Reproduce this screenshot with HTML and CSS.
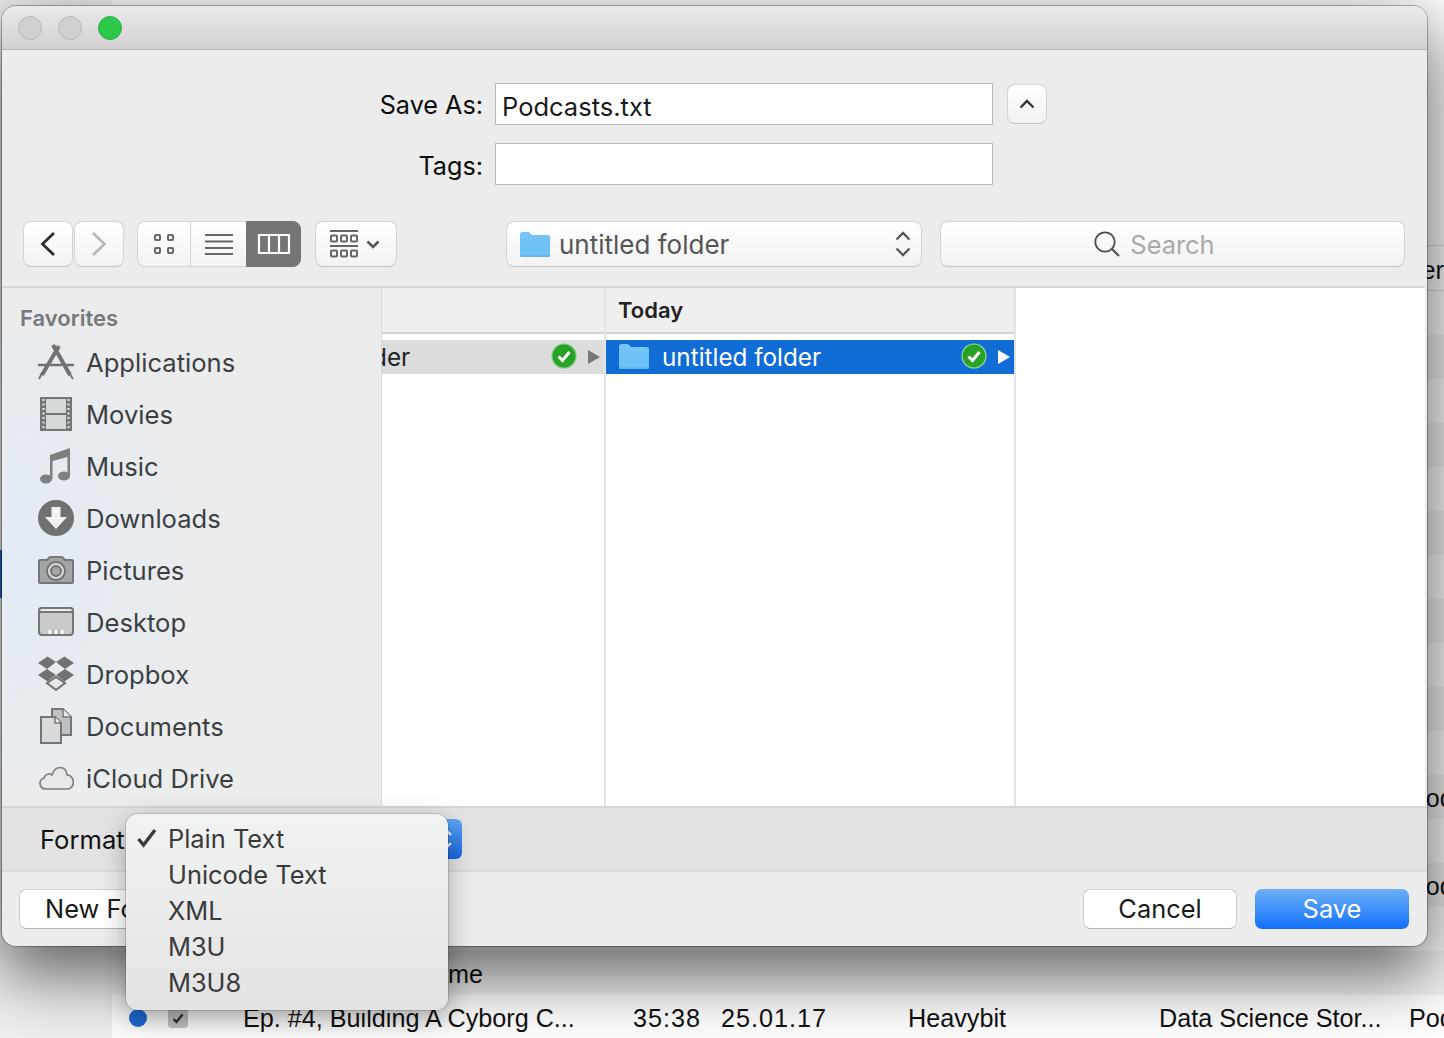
FILE: index.html
```html
<!DOCTYPE html>
<html lang="en">
<head>
<meta charset="utf-8">
<title>Save dialog</title>
<link rel="stylesheet" href="styles.css">
</head>
<body>
<div class="desktop">
  <div class="side-mark"></div>
  <div class="app">
    <div class="app-top"></div>
    <div class="app-row head"><span class="c-last-end">Provider</span></div>
    <div class="app-row"></div><div class="app-row"></div><div class="app-row"></div><div class="app-row"></div>
    <div class="app-row"></div><div class="app-row"></div><div class="app-row"></div><div class="app-row"></div>
    <div class="app-row"></div><div class="app-row"></div><div class="app-row"></div>
    <div class="app-row"><span class="c-last">Podcast</span></div>
    <div class="app-row"></div>
    <div class="app-row"><span class="c-last">Podcast</span></div>
    <div class="app-row"></div>
    <div class="app-row"><span class="c-title-end">Ep. #5, A Good Name</span></div>
    <div class="app-row">
      <span class="dot"></span>
      <span class="tick"><svg width="12" height="11" viewBox="0 0 12 11"><path d="M1.5 6 L4.5 9 L10.5 1.5" fill="none" stroke="#333" stroke-width="2.4"/></svg></span>
      <span class="c-title">Ep. #4, Building A Cyborg C...</span>
      <span class="c-time">35:38</span>
      <span class="c-date">25.01.17</span>
      <span class="c-author">Heavybit</span>
      <span class="c-show">Data Science Stor...</span>
      <span class="c-last">Podcast</span>
    </div>
  </div>

  <div class="dialog">
    <div class="titlebar">
      <span class="light"></span><span class="light"></span><span class="light on"></span>
    </div>

    <div class="form">
      <label class="form-label">Save As:</label>
      <div class="field name">Podcasts.txt</div>
      <button class="tool collapse"><svg width="16" height="10" viewBox="0 0 16 10"><path d="M1.5 8.5 L8 2 L14.5 8.5" fill="none" stroke="#333" stroke-width="2.4"/></svg></button>
      <label class="form-label tags-label">Tags:</label>
      <div class="field tags-field"></div>
    </div>

    <div class="toolbar">
      <div class="nav-pair">
        <button class="tool nav"><svg width="16" height="26" viewBox="0 0 16 26"><path d="M14 2 L2.5 13 L14 24" fill="none" stroke="#2e2e2e" stroke-width="2.8"/></svg></button>
        <button class="tool nav"><svg width="16" height="26" viewBox="0 0 16 26"><path d="M2 2 L13.5 13 L2 24" fill="none" stroke="#b9b9b9" stroke-width="2.8"/></svg></button>
      </div>
      <div class="segments">
        <button class="seg seg-icon"><svg width="22" height="22" viewBox="0 0 22 22"><g fill="none" stroke="#666" stroke-width="2"><rect x="2" y="2" width="5" height="5" rx="1"/><rect x="15" y="2" width="5" height="5" rx="1"/><rect x="2" y="15" width="5" height="5" rx="1"/><rect x="15" y="15" width="5" height="5" rx="1"/></g></svg></button>
        <button class="seg seg-list"><svg width="28" height="22" viewBox="0 0 28 22"><path d="M0 2H28M0 8.5H28M0 15H28M0 21H28" stroke="#666" stroke-width="2"/></svg></button>
        <button class="seg seg-col"><svg width="34" height="22" viewBox="0 0 34 22"><path d="M2 2H32V20H2ZM12 2V20M22 2V20" fill="none" stroke="#fff" stroke-width="2.2"/></svg></button>
      </div>
      <button class="tool arrange">
        <svg width="30" height="28" viewBox="0 0 30 28"><path d="M1 1H29M1 16H29" stroke="#666" stroke-width="2"/><g fill="none" stroke="#666" stroke-width="2"><rect x="2" y="5.5" width="6" height="6" rx="1"/><rect x="12" y="5.5" width="6" height="6" rx="1"/><rect x="22" y="5.5" width="6" height="6" rx="1"/><rect x="2" y="20.5" width="6" height="6" rx="1"/><rect x="12" y="20.5" width="6" height="6" rx="1"/><rect x="22" y="20.5" width="6" height="6" rx="1"/></g></svg>
        <svg width="14" height="9" viewBox="0 0 14 9"><path d="M1.5 1.5 L7 7 L12.5 1.5" fill="none" stroke="#555" stroke-width="2.6"/></svg>
      </button>
      <button class="tool path">
        <svg class="folder" width="30" height="25" viewBox="0 0 30 25"><path d="M0 2.5 Q0 0 2.5 0 H9 L12 3 H28 Q30 3 30 5 V23 Q30 25 28 25 H2 Q0 25 0 23Z" fill="#75c6f7"/><path d="M0 6H30V23Q30 25 28 25H2Q0 25 0 23Z" fill="#6fc3f8"/><path d="M0 24H30" stroke="#58a8dc" stroke-width="1"/></svg>
        <span class="path-text">untitled folder</span>
        <svg class="updown" width="16" height="26" viewBox="0 0 16 26"><path d="M1.5 8.5 L8 2 L14.5 8.5M1.5 17.5 L8 24 L14.5 17.5" fill="none" stroke="#555" stroke-width="2.3"/></svg>
      </button>
      <div class="search">
        <svg width="26" height="26" viewBox="0 0 26 26"><circle cx="11" cy="11" r="9.7" fill="none" stroke="#4d4d4d" stroke-width="1.8"/><path d="M18 18 L25 25" stroke="#4d4d4d" stroke-width="2.2"/></svg>
        <span class="search-text">Search</span>
      </div>
    </div>

    <div class="browser">
      <aside class="sidebar">
        <h2 class="side-title">Favorites</h2>
        <ul class="side-list">
          <li class="side-item">
            <svg width="36" height="36" viewBox="0 0 36 36"><g stroke="#6f7173" fill="none"><path d="M21 2 L4 31" stroke-width="4"/><path d="M15 1 L32 31" stroke-width="4"/><path d="M0 21H8M12 21H24M28 21H36" stroke-width="2.6"/><path d="M1 35 L4 29" stroke-width="2"/><path d="M35 35 L31 29" stroke-width="2"/></g></svg>
            <span>Applications</span>
          </li>
          <li class="side-item">
            <svg width="36" height="36" viewBox="0 0 36 36"><rect x="3" y="2" width="30" height="32" fill="#d5d8d9" stroke="#737578" stroke-width="2"/><path d="M5.5 1V35M30.5 1V35" stroke="#737578" stroke-width="5"/><path d="M5.5 3V33M30.5 3V33" stroke="#e8e9ea" stroke-width="2" stroke-dasharray="2 2.5"/><path d="M8 18H28" stroke="#737578" stroke-width="2"/></svg>
            <span>Movies</span>
          </li>
          <li class="side-item">
            <svg width="36" height="36" viewBox="0 0 36 36"><g fill="#7d7f81"><ellipse cx="8" cy="31" rx="6" ry="4.6"/><ellipse cx="26" cy="28" rx="6" ry="4.6"/><path d="M12 7 L32 0 V28 H29.5 V9 L14.5 13 V31 H12Z"/></g></svg>
            <span>Music</span>
          </li>
          <li class="side-item">
            <svg width="36" height="36" viewBox="0 0 36 36"><circle cx="18" cy="18" r="18" fill="#6f7173"/><path d="M13.5 7H22.5V17H29L18 29 L7 17H13.5Z" fill="#f2f3f4"/></svg>
            <span>Downloads</span>
          </li>
          <li class="side-item">
            <svg width="36" height="36" viewBox="0 0 36 36"><path d="M1 9 Q1 8 2 8 H9 L12 5 H24 L27 8 H34 Q35 8 35 9 V30 Q35 31 34 31 H2 Q1 31 1 30Z" fill="#a2a5a8" stroke="#74767a" stroke-width="2"/><circle cx="18" cy="19" r="9" fill="#d9dbdc" stroke="#6f7173" stroke-width="2"/><circle cx="18" cy="19" r="5" fill="#a2a5a8" stroke="#6f7173" stroke-width="2"/></svg>
            <span>Pictures</span>
          </li>
          <li class="side-item">
            <svg width="36" height="36" viewBox="0 0 36 36"><rect x="1" y="4" width="34" height="27" rx="3" fill="#c8cacb" stroke="#74767a" stroke-width="2"/><path d="M1 7 Q1 4 4 4 H32 Q35 4 35 7 V8 H1Z" fill="#eceded" stroke="#74767a" stroke-width="2"/><path d="M10 26H26V30H10Z" fill="#eef0f0"/><path d="M15 26V30M21 26V30" stroke="#8a8c8e" stroke-width="1.5"/></svg>
            <span>Desktop</span>
          </li>
          <li class="side-item">
            <svg width="36" height="36" viewBox="0 0 36 36"><g fill="#6f7173"><path d="M0 7 L9.5 0.5 L18 6 L9 13Z"/><path d="M18 6 L26.5 0.5 L36 7 L27 13Z"/><path d="M0 19 L9 13 L18 19 L9.5 25.5Z"/><path d="M18 19 L27 13 L36 19 L26.5 25.5Z"/></g><path d="M9 27 L18 21 L27 27 L18 34Z" fill="#e4e5e6" stroke="#6f7173" stroke-width="2"/></svg>
            <span>Dropbox</span>
          </li>
          <li class="side-item">
            <svg width="36" height="36" viewBox="0 0 36 36"><path d="M14 1 H25 L33 9 V27 H14Z" fill="#bfc1c3" stroke="#737578" stroke-width="2"/><path d="M25 1 V9 H33" fill="#e8e9ea" stroke="#737578" stroke-width="1.5"/><path d="M3 9 H17 L23 15 V35 H3Z" fill="#d8dadb" stroke="#737578" stroke-width="2"/><path d="M17 9 V15 H23" fill="#eff0f0" stroke="#737578" stroke-width="1.5"/></svg>
            <span>Documents</span>
          </li>
          <li class="side-item">
            <svg width="36" height="36" viewBox="0 0 36 36"><path d="M8 29 C1 29 0 20 6 18 C7 14 12 13 14 15 C17 5 28 5 29 15 C37 15 38 29 29 29Z" fill="#e6e8e9" stroke="#7e8082" stroke-width="1.7"/></svg>
            <span>iCloud Drive</span>
          </li>
        </ul>
      </aside>
      <section class="column col-a">
        <div class="col-head"></div>
        <div class="col-row parent">
          <span class="cut-name">der</span>
          <svg class="badge" width="26" height="26" viewBox="0 0 26 26"><circle cx="13" cy="13" r="12" fill="#27a227" stroke="#7fc87f" stroke-width="1.2"/><path d="M7.5 13.5 L11.5 17.5 L18.5 9" fill="none" stroke="#fff" stroke-width="3"/></svg>
          <svg class="arrow" width="12" height="14" viewBox="0 0 12 14"><path d="M0 0 L12 7 L0 14Z" fill="#777"/></svg>
        </div>
      </section>
      <section class="column col-b">
        <div class="col-head"><span class="col-title">Today</span></div>
        <div class="col-row selected">
          <svg class="folder-b" width="30" height="25" viewBox="0 0 30 25"><path d="M0 2.5 Q0 0 2.5 0 H9 L12 3 H28 Q30 3 30 5 V23 Q30 25 28 25 H2 Q0 25 0 23Z" fill="#75c6f7"/><path d="M0 6H30V23Q30 25 28 25H2Q0 25 0 23Z" fill="#6fc3f8"/><path d="M0 24H30" stroke="#58a8dc" stroke-width="1"/></svg>
          <span class="sel-name">untitled folder</span>
          <svg class="badge" width="26" height="26" viewBox="0 0 26 26"><circle cx="13" cy="13" r="12" fill="#27a227" stroke="#9ad79a" stroke-width="1.2"/><path d="M7.5 13.5 L11.5 17.5 L18.5 9" fill="none" stroke="#fff" stroke-width="3"/></svg>
          <svg class="arrow" width="12" height="14" viewBox="0 0 12 14"><path d="M0 0 L12 7 L0 14Z" fill="#fff"/></svg>
        </div>
      </section>
      <section class="column col-c"></section>
    </div>

    <div class="format-bar">
      <span class="format-label">Format:</span>
      <div class="popup"><span class="popup-end"><svg width="16" height="26" viewBox="0 0 16 26"><path d="M2 9 L8 3 L14 9M2 17 L8 23 L14 17" fill="none" stroke="#fff" stroke-width="2.4"/></svg></span></div>
    </div>

    <div class="actions">
      <button class="btn new-folder">New Folder</button>
      <button class="btn cancel">Cancel</button>
      <button class="btn save">Save</button>
    </div>

    <div class="menu">
      <div class="menu-item"><svg class="menu-check" width="20" height="20" viewBox="0 0 20 20"><path d="M1.5 11 L6.5 17 L18 2" fill="none" stroke="#3a3a3a" stroke-width="3.4"/></svg><span>Plain Text</span></div>
      <div class="menu-item"><span>Unicode Text</span></div>
      <div class="menu-item"><span>XML</span></div>
      <div class="menu-item"><span>M3U</span></div>
      <div class="menu-item"><span>M3U8</span></div>
    </div>
  </div>
</div>
</body>
</html>
```

FILE: styles.css
```css
* { box-sizing: border-box; }
html, body { margin: 0; padding: 0; width: 1444px; height: 1038px; overflow: hidden; }
body { font-family: Inter, "Liberation Sans", sans-serif; font-size: 25px; color: #111; }

.desktop { position: relative; width: 1444px; height: 1038px; background: #f0f0f0; overflow: hidden; }
.side-mark { position: absolute; left: 0; top: 550px; width: 4px; height: 48px; background: #1b63c4; }

/* app behind the dialog */
.app { position: absolute; left: 112px; top: 0; width: 1332px; height: 1038px; background: #fff; font-family: "Liberation Sans", Arial, sans-serif; font-size: 25.2px; color: #111; }
.app-top { height: 245px; }
.app-row { height: 44px; display: flex; align-items: center; position: relative; background: #fff; white-space: nowrap; padding-top: 2px; }
.app-row:nth-child(even) { background: #f4f4f4; }
.app-row.head { background: #fff; height: 46px; border-top: 1px solid #ddd; border-bottom: 1px solid #ddd; justify-content: flex-end; padding-top: 5px; }
.dot { margin-left: 17px; width: 18px; height: 18px; border-radius: 50%; background: #1f6fd8; flex: none; }
.tick { margin-left: 21px; width: 20px; height: 20px; border-radius: 4px; background: #c4c4c4; display: flex; align-items: center; justify-content: center; flex: none; }
.c-title { margin-left: 55px; width: 390px; flex: none; }
.c-title-end { width: 371px; text-align: right; flex: none; }
.c-time { width: 88px; flex: none; letter-spacing: 1px; }
.c-date { width: 187px; flex: none; letter-spacing: 1px; }
.c-author { width: 251px; flex: none; }
.c-show { width: 250px; flex: none; }
.c-last { position: absolute; left: 1297px; }

/* dialog window */
.dialog { position: absolute; left: 2px; top: 6px; width: 1425px; height: 940px; background: #ececec; border-radius: 14px; display: flex; flex-direction: column; box-shadow: 0 0 0 1px rgba(0,0,0,.28), 0 24px 70px 4px rgba(0,0,0,.62); }

.titlebar { height: 44px; flex: none; border-radius: 14px 14px 0 0; background: linear-gradient(#ebe9eb, #d2d0d2); border-bottom: 1px solid #b6b6b6; display: flex; align-items: center; gap: 16px; padding-left: 16px; }
.light { width: 24px; height: 24px; border-radius: 50%; background: #d0d0d0; border: 1px solid #b9b9b9; flex: none; }
.light.on { background: #2cc84a; border-color: #2ab145; }

.form { flex: none; display: grid; grid-template-columns: 481px 498px 40px; column-gap: 12px; grid-template-rows: 42px 42px; row-gap: 18px; padding-top: 33px; height: 171px; align-items: center; }
.form-label { text-align: right; font-size: 25.2px; color: #0c0c0c; padding-top: 2px; }
.form .field { background: #fff; border: 1px solid #b8b8b8; height: 42px; font-size: 25.5px; color: #1b1b1b; padding: 4px 0 0 6px; line-height: 38px; }
.form .tags-label { grid-column: 1; grid-row: 2; padding-top: 4px; }
.tags-field { grid-column: 2; grid-row: 2; }
.tool { font: inherit; padding: 0; border: 1px solid #d4d4d4; border-bottom-color: #c4c4c4; border-radius: 8px; background: linear-gradient(#fff, #f2f2f2); display: flex; align-items: center; justify-content: center; }
.collapse { width: 40px; height: 40px; margin-left: 2px; }

.toolbar { flex: none; height: 46px; display: flex; padding-left: 21px; }
.nav-pair { display: flex; gap: 1px; }
.nav { width: 50px; height: 46px; }
.segments { display: flex; margin-left: 13px; height: 46px; }
.seg { font: inherit; padding: 0; border: 1px solid #d4d4d4; background: linear-gradient(#fff, #f2f2f2); display: flex; align-items: center; justify-content: center; height: 46px; }
.seg-icon { width: 53px; border-radius: 8px 0 0 8px; border-right: 0; }
.seg-list { width: 56px; border-right: 0; }
.seg-col { width: 55px; background: #757575; border-color: #757575; border-radius: 0 8px 8px 0; }
.arrange { margin-left: 14px; width: 82px; height: 46px; gap: 7px; padding-right: 3px; }
.path { margin-left: 109px; width: 416px; height: 46px; justify-content: flex-start; padding-left: 13px; color: #555; }
.path-text { margin-left: 9px; font-size: 26px; color: #555; }
.updown { margin-left: auto; margin-right: 10px; }
.search { margin-left: 18px; width: 465px; height: 46px; border: 1px solid #d4d4d4; border-bottom-color: #c4c4c4; border-radius: 8px; background: linear-gradient(#fff, #f2f2f2); display: flex; align-items: center; justify-content: center; gap: 10px; padding-right: 36px; }
.search-text { color: #a9a9a9; font-size: 25.4px; }

.browser { flex: none; margin-top: 19px; height: 520px; border-top: 2px solid #d6d6d6; display: flex; background: #fff; margin-right: 2px; }
.sidebar { width: 380px; flex: none; border-right: 1px solid #d9d9d9; background: radial-gradient(ellipse 220px 280px at 0 52%, #e3ebf6, transparent), #ebecec; padding-top: 18px; overflow: hidden; }
.side-title { margin: 0 0 0 18px; font-size: 22px; line-height: 24px; font-weight: 600; color: #76797b; }
.side-list { list-style: none; margin: 6px 0 0; padding: 0; }
.side-item { height: 52px; display: flex; align-items: center; padding-left: 36px; gap: 12px; font-size: 25.6px; color: #3c3f42; }
.side-item svg { flex: none; }

.column { flex: none; display: flex; flex-direction: column; border-right: 2px solid #e3e3e3; }
.col-a { width: 224px; }
.col-b { width: 410px; }
.col-c { flex: 1; border-right: 0; }
.col-head { height: 46px; background: #efefef; border-bottom: 2px solid #d2d2d2; flex: none; display: flex; align-items: center; padding-left: 12px; }
.col-title { font-size: 22px; font-weight: 600; color: #222; }
.col-row { margin-top: 6px; height: 34px; display: flex; align-items: center; overflow: hidden; font-size: 24.3px; }
.col-row.parent { background: #dcdcdc; color: #222; }
.col-row.selected { background: #116cd6; color: #fff; }
.cut-name { margin-left: -10px; }
.col-row .badge { margin-left: auto; margin-bottom: 2px; }
.col-row .arrow { margin-left: 11px; margin-right: 4px; margin-bottom: 1px; }
.folder-b { margin-left: 13px; flex: none; margin-bottom: 2px; }
.sel-name { margin-left: 13px; }

.format-bar { flex: none; height: 66px; background: #e3e3e3; border-top: 2px solid #d6d6d6; border-bottom: 2px solid #dadada; display: flex; align-items: center; padding-left: 38px; }
.format-label { font-size: 25.6px; color: #111; }
.popup { margin-left: 6px; width: 324px; height: 40px; background: #fff; border-radius: 6px; overflow: hidden; display: flex; justify-content: flex-end; }
.popup-end { width: 34px; background: linear-gradient(#5ea8f8, #1666e0); display: flex; align-items: center; justify-content: center; }

.actions { flex: 1; display: flex; align-items: flex-start; padding: 17px 18px 0 17px; }
.btn { font: inherit; font-size: 25.4px; height: 40px; border-radius: 7px; padding: 0; border: 1px solid #cfcfcf; border-bottom-color: #b4b4b4; background: #fff; color: #1a1a1a; line-height: 36px; }
.new-folder { width: 200px; text-align: left; padding-left: 25px; }
.cancel { margin-left: auto; width: 154px; }
.save { margin-left: 18px; width: 154px; border: 0; color: #fff; background: linear-gradient(#6cb0f9, #1270fb); }

.menu { position: absolute; left: 124px; top: 808px; width: 322px; height: 196px; border-radius: 12px; background: linear-gradient(#f1f2f2, #e3e3e3); box-shadow: 0 0 0 1px rgba(0,0,0,.14), 0 8px 26px rgba(0,0,0,.3); padding-top: 6px; font-size: 25.4px; color: #3a3a3a; }
.menu-item { height: 36px; display: flex; align-items: center; padding-left: 42px; position: relative; }
.menu-check { position: absolute; left: 11px; top: 8px; }
```
